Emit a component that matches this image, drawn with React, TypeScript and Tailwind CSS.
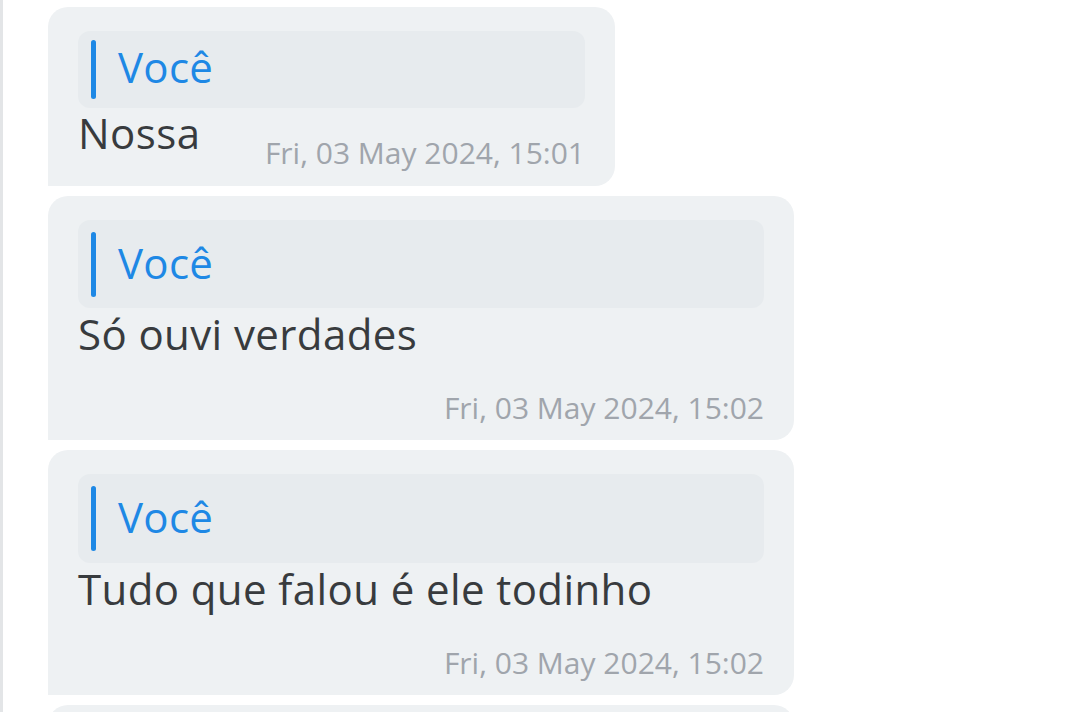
import React from "react";

const font = { fontFamily: "'Open Sans', 'Noto Sans', sans-serif" };

function Quote({ h, bar, mb }: { h: string; bar: string; mb: string }) {
  return (
    <div className={`flex items-center rounded-[12px] bg-[#e7ebee] pl-[13px] ${h}`}>
      <div className={`w-[5px] rounded-full bg-[#1e88e5] ${bar}`} />
      <span className={`ml-[22px] text-[42px] leading-none tracking-[0.3px] text-[#1e88e5] ${mb}`}>Você</span>
    </div>
  );
}

export default function App() {
  return (
    <div
      className="h-[712px] w-full overflow-hidden border-l-[3px] border-[#e3e5e7] bg-white pl-[45px] pt-[7px]"
      style={font}
    >
      <div className="flex flex-col items-start gap-[10px]">
        <div className="w-[567px] rounded-tl-[20px] rounded-r-[20px] bg-[#eef1f3] px-[30px] pt-[24px]">
          <Quote h="h-[77px]" bar="h-[59px]" mb="mb-[6px]" />
          <div className="flex h-[78px] items-start justify-between">
            <span className="mt-[4px] text-[42px] leading-none tracking-[0.45px] text-[#383b3e]">Nossa</span>
            <span className="mt-[30px] text-[30px] leading-none text-[#a0a5ac]">Fri, 03 May 2024, 15:01</span>
          </div>
        </div>

        <div className="w-[746px] rounded-tl-[20px] rounded-r-[20px] bg-[#eef1f3] px-[30px] pt-[24px]">
          <Quote h="h-[88px]" bar="h-[65px]" mb="mb-[3px]" />
          <div className="flex h-[132px] flex-col">
            <span className="mt-[5px] text-[42px] leading-none tracking-[0.4px] text-[#383b3e]">Só ouvi verdades</span>
            <span className="mt-auto mb-[17px] self-end text-[30px] leading-none text-[#a0a5ac]">Fri, 03 May 2024, 15:02</span>
          </div>
        </div>

        <div className="w-[746px] rounded-tl-[20px] rounded-r-[20px] bg-[#eef1f3] px-[30px] pt-[24px]">
          <Quote h="h-[89px]" bar="h-[65px]" mb="mb-[3px]" />
          <div className="flex h-[132px] flex-col">
            <span className="mt-[5px] text-[42px] leading-none tracking-[0.4px] text-[#383b3e]">Tudo que falou é ele todinho</span>
            <span className="mt-auto mb-[17px] self-end text-[30px] leading-none text-[#a0a5ac]">Fri, 03 May 2024, 15:02</span>
          </div>
        </div>

        <div className="h-[80px] w-[746px] rounded-tl-[20px] rounded-r-[20px] bg-[#eef1f3]" />
      </div>
    </div>
  );
}
